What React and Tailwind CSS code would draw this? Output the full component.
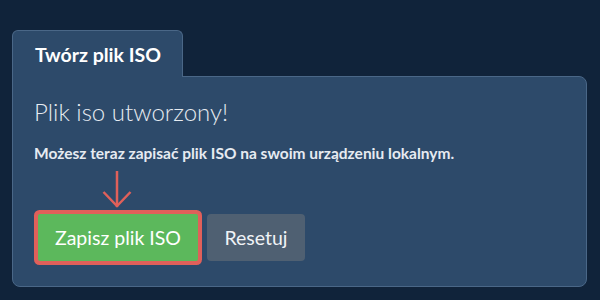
import React from 'react';

const App = () => {
    return (
        <div className="w-[600px] h-[300px] bg-[#10233a] pt-[30px] pl-3" style={{ fontFamily: 'Lato, "Noto Sans", sans-serif' }}>
            {/* Tab */}
            <div className="relative z-10 -mb-px w-[171px] h-[47px] bg-[#2d4a6a] border border-b-0 border-[#4a6787] rounded-t-[6px] pl-[22px] pt-[14px]">
                <span className="block text-[19.5px] font-bold text-white leading-none">Twórz plik ISO</span>
            </div>
            {/* Panel */}
            <div className="w-[575px] h-[211px] bg-[#2d4a6a] border border-[#4a6787] rounded-b-[8px] rounded-tr-[8px] px-[21px] pt-[20px]">
                <h2 className="text-[24px] font-light text-[#e6ebf1] leading-[30px]">Plik iso utworzony!</h2>
                <p className="mt-[16px] text-[15.5px] font-bold text-[#e6ebf1] leading-[20px]">
                    Możesz teraz zapisać plik ISO na swoim urządzeniu lokalnym.
                </p>
                <div className="mt-[51px] flex items-center pl-[4px]">
                    <div className="relative">
                        {/* annotation arrow */}
                        <svg className="absolute left-[64px] top-[-43px]" width="30" height="38" viewBox="0 0 30 38" fill="none" stroke="#e0605a" strokeWidth="2.5" strokeLinecap="butt">
                            <line x1="15" y1="0" x2="15" y2="36" />
                            <polyline points="1.5,21 15,35 28.5,21" />
                        </svg>
                        <button className="h-[47px] w-[160px] bg-[#5cb85c] text-white text-[19.5px] rounded-[2px] ring-4 ring-[#e0605a]">
                            Zapisz plik ISO
                        </button>
                    </div>
                    <button className="ml-[9px] h-[47px] w-[98px] bg-[#4f6072] text-[#f0f3f6] text-[19.5px] rounded-[4px]">
                        Resetuj
                    </button>
                </div>
            </div>
        </div>
    );
};

export default App;
